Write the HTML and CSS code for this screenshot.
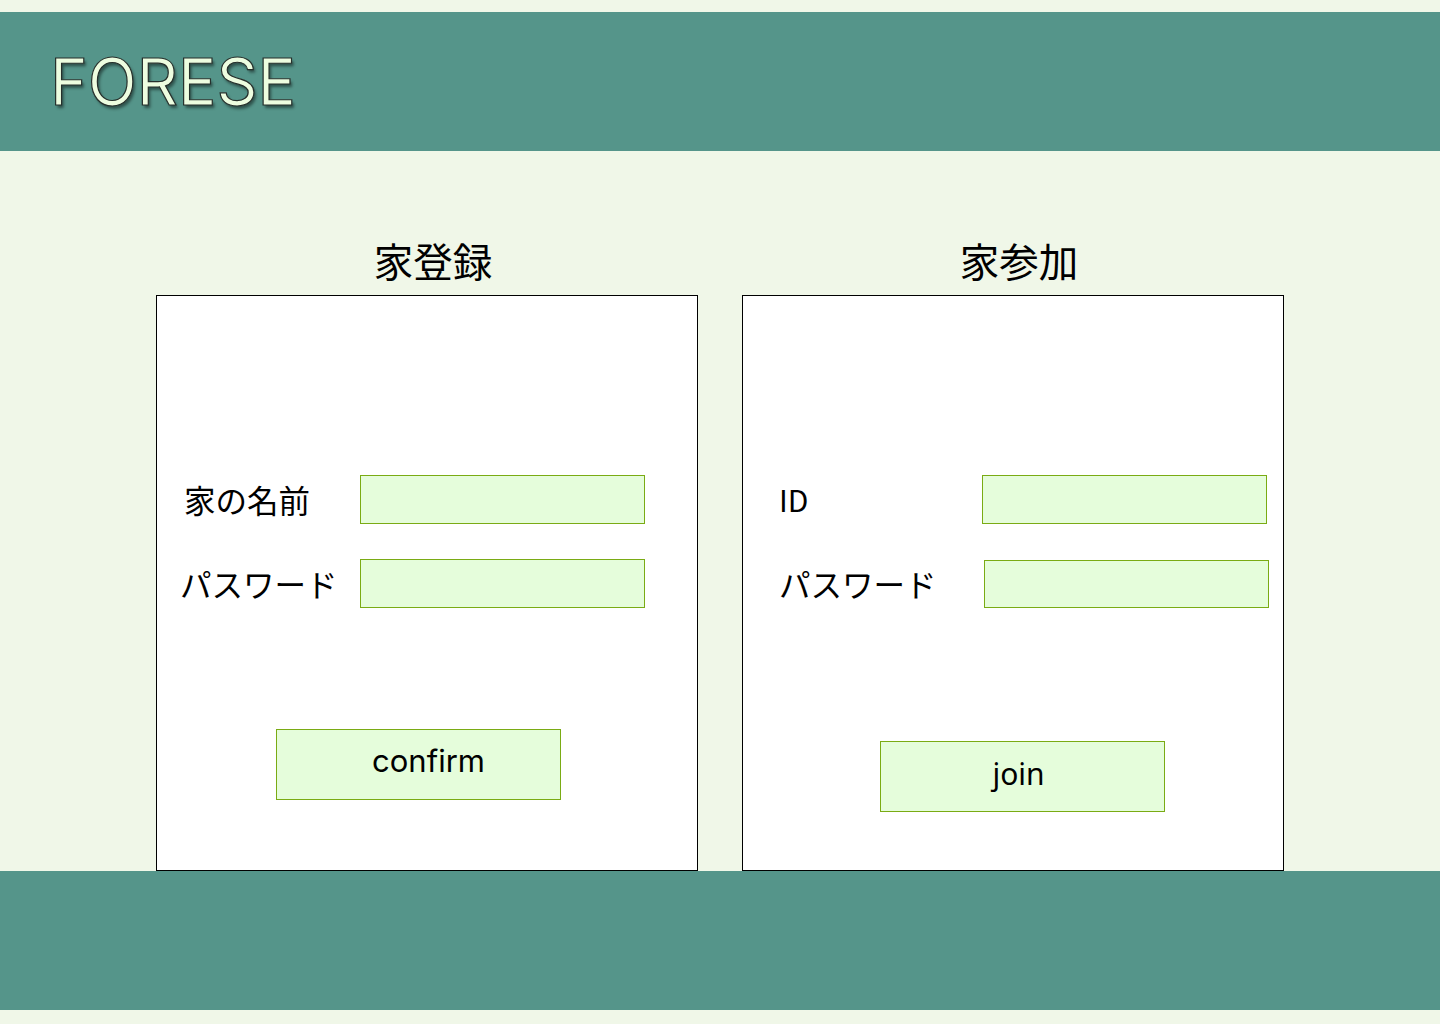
FILE: index.html
```html
<!DOCTYPE html>
<html lang="ja">
<head>
<meta charset="utf-8">
<title>FORESE</title>
<link rel="stylesheet" href="styles.css">
</head>
<body>
<header class="header">
  <h1 class="logo">FORESE</h1>
</header>
<main class="main">
  <section class="column">
    <h2 class="column-title">家登録</h2>
    <div class="card card-register">
      <div class="fields">
        <label class="row">
          <span class="label">家の名前</span>
          <input class="field" type="text">
        </label>
        <label class="row row-pw">
          <span class="label label-pw">パスワード</span>
          <input class="field" type="password">
        </label>
      </div>
      <button class="btn btn-confirm" type="button">confirm</button>
    </div>
  </section>
  <section class="column">
    <h2 class="column-title">家参加</h2>
    <div class="card card-join">
      <div class="fields">
        <label class="row">
          <span class="label label-id">ID</span>
          <input class="field" type="text">
        </label>
        <label class="row row-pw">
          <span class="label">パスワード</span>
          <input class="field field-shift" type="password">
        </label>
      </div>
      <button class="btn btn-join" type="button">join</button>
    </div>
  </section>
</main>
<footer class="footer"></footer>
</body>
</html>
```
FILE: styles.css
```css
* { box-sizing: border-box; }

html, body {
  margin: 0;
  padding: 0;
}

body {
  background: #f0f7e8;
  font-family: "Noto Sans CJK JP", "Noto Sans", sans-serif;
  color: #000;
  padding-top: 12px;
  padding-bottom: 14px;
}

.header {
  height: 139px;
  background: #55958a;
  display: flex;
  align-items: center;
  padding-left: 50px;
}

.logo {
  margin: 0;
  font-family: Inter, "Noto Sans", sans-serif;
  font-weight: 400;
  font-size: 64px;
  line-height: 1;
  color: #edfde0;
  -webkit-text-stroke: 1.2px #26302c;
  text-shadow: 2px 3px 3px rgba(0, 0, 0, 0.45);
}

.main {
  height: 720px;
  display: flex;
  justify-content: center;
  gap: 44px;
  padding-top: 83px;
}

.column {
  width: 542px;
  display: flex;
  flex-direction: column;
}

.column-title {
  margin: 0 0 9px;
  font-weight: 400;
  font-size: 39.5px;
  line-height: 52px;
  text-align: center;
  padding-left: 12px;
}

.card {
  flex: 1;
  background: #fff;
  border: 1px solid #000;
  display: flex;
  flex-direction: column;
}

.fields {
  display: flex;
  flex-direction: column;
  gap: 35px;
  padding-top: 179px;
}

.row {
  display: flex;
  align-items: center;
}

.label {
  font-size: 31.5px;
  line-height: 49px;
}

.field {
  width: 285px;
  height: 49px;
  margin: 0;
  padding: 0;
  background: #e5fddb;
  border: 1px solid #7aab14;
  border-radius: 0;
  outline: none;
}

.card-register .row { padding-left: 27px; }
.card-register .label { width: 176px; }
.card-register .label-pw { margin-left: -4px; width: 180px; }

.card-join .row { padding-left: 36px; }
.card-join .label { width: 203px; }
.card-join .label-id { font-size: 30px; }
.card-join .field-shift { margin-left: 2px; height: 48px; }

.btn {
  width: 285px;
  height: 71px;
  background: #e5fddb;
  border: 1px solid #7aab14;
  border-radius: 0;
  font-family: Inter, "Noto Sans", sans-serif;
  font-size: 31px;
  color: #000;
  padding: 0 0 8px;
}

.btn-confirm {
  margin: 121px 0 0 119px;
  padding-left: 20px;
}

.btn-join {
  margin: 133px 0 0 137px;
  padding-left: 0;
  padding-right: 8px;
  font-size: 30px;
  padding-bottom: 6px;
  font-family: "Noto Sans", sans-serif;
}

.footer {
  height: 139px;
  background: #55958a;
}
```
